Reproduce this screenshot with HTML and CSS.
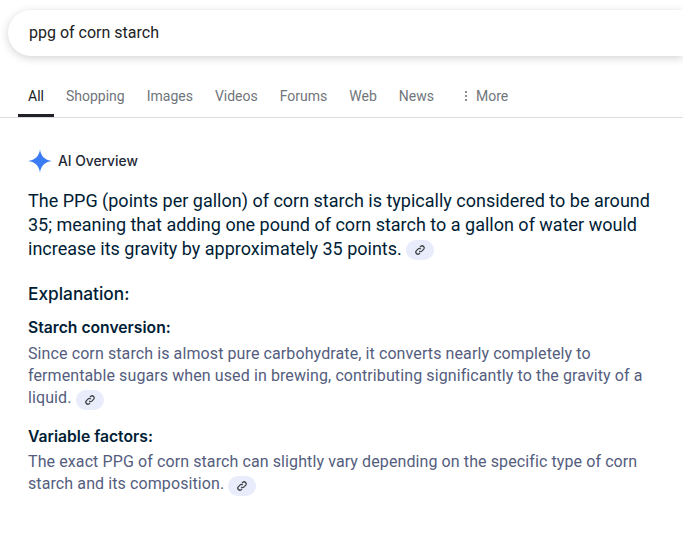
FILE: index.html
```
<!DOCTYPE html>
<html lang="en">
<head>
<meta charset="utf-8">
<title>ppg of corn starch</title>
<link rel="stylesheet" href="styles.css">
</head>
<body>
<header class="top">
  <div class="search">ppg of corn starch</div>
  <nav class="tabs">
    <a class="tab active">All</a>
    <a class="tab">Shopping</a>
    <a class="tab">Images</a>
    <a class="tab">Videos</a>
    <a class="tab">Forums</a>
    <a class="tab">Web</a>
    <a class="tab">News</a>
    <a class="tab more"><svg class="dots" width="4" height="12" viewBox="0 0 4 12"><circle cx="2" cy="2" r="1.1"/><circle cx="2" cy="6" r="1.1"/><circle cx="2" cy="10" r="1.1"/></svg>More</a>
  </nav>
</header>
<main class="overview">
  <div class="ai-head">
    <svg class="spark" width="24" height="24" viewBox="0 0 24 24"><path d="M12 0C12.6 6.8 16.6 11 24 12C16.6 13 12.6 17.2 12 24C11.4 17.2 7.4 13 0 12C7.4 11 11.4 6.8 12 0Z"/></svg>
    <span class="ai-title">AI Overview</span>
  </div>
  <p class="lead">The PPG (points per gallon) of corn starch is typically considered to be around 35; meaning that adding one pound of corn starch to a gallon of water would increase its gravity by approximately 35 points. <span class="chip"><svg width="10" height="10" viewBox="0 0 24 24"><path d="M10 14a5 5 0 0 0 7 0l4-4a5 5 0 0 0-7-7l-2 2M14 10a5 5 0 0 0-7 0l-4 4a5 5 0 0 0 7 7l2-2"/></svg></span></p>
  <h2 class="explain">Explanation:</h2>
  <h3 class="item-title">Starch conversion:</h3>
  <p class="item-text">Since corn starch is almost pure carbohydrate, it converts nearly completely to fermentable sugars when used in brewing, contributing significantly to the gravity of a liquid. <span class="chip"><svg width="10" height="10" viewBox="0 0 24 24"><path d="M10 14a5 5 0 0 0 7 0l4-4a5 5 0 0 0-7-7l-2 2M14 10a5 5 0 0 0-7 0l-4 4a5 5 0 0 0 7 7l2-2"/></svg></span></p>
  <h3 class="item-title second">Variable factors:</h3>
  <p class="item-text tight">The exact PPG of corn starch can slightly vary depending on the specific type of corn starch and its composition. <span class="chip"><svg width="10" height="10" viewBox="0 0 24 24"><path d="M10 14a5 5 0 0 0 7 0l4-4a5 5 0 0 0-7-7l-2 2M14 10a5 5 0 0 0-7 0l-4 4a5 5 0 0 0 7 7l2-2"/></svg></span></p>
</main>
</body>
</html>
```
FILE: styles.css
```
html, body { margin: 0; padding: 0; background: #fff; height: 100%; overflow: hidden; }
body { font-family: Roboto, "Liberation Sans", sans-serif; color: #001d35; }
.top { padding-top: 10px; border-bottom: 1px solid #dadce0; }
.search {
  margin-left: 8px;
  height: 46px;
  line-height: 45px;
  padding-left: 21px;
  border-radius: 23px 0 0 23px;
  background: #fff;
  font-size: 16px;
  color: #202124;
  box-shadow: 0 2px 8px rgba(32, 33, 36, 0.2);
}
.tabs { display: flex; margin-top: 28px; padding-left: 18px; height: 33px; }
.tab {
  font-size: 14px;
  line-height: 24px;
  color: #70757a;
  margin-right: 22px;
  height: 33px;
  box-sizing: border-box;
}
.tab.active { color: #202124; border-bottom: 3px solid #202124; padding: 0 10px; margin-right: 12px; }
.tab.more { margin-left: 8px; margin-right: 0; display: flex; align-items: flex-start; }
.dots { fill: #70757a; margin: 6px 8px 0 0; }
.overview { padding: 31px 30px 0 28px; }
.ai-head { display: flex; align-items: center; gap: 6px; height: 24px; }
.spark { fill: #3b7cf4; }
.ai-title { font-family: Inter, sans-serif; font-size: 13.8px; font-weight: 500; color: #1f2937; }
.lead { margin: 16px 0 0; font-size: 18px; line-height: 24px; color: #001d35; }
.chip {
  display: inline-flex; align-items: center; justify-content: center;
  width: 28px; height: 20px; border-radius: 10px; background: #e8ecfb;
  vertical-align: -2px; margin: -3px 0;
}
.lead .chip { vertical-align: 0; }
.chip svg { fill: none; stroke: #3c4043; stroke-width: 3; }
.explain { margin: 21px 0 0; font-family: Inter, sans-serif; font-size: 17.3px; line-height: 24px; font-weight: 500; color: #001d35; }
.item-title { margin: 11px 0 0; font-family: Inter, sans-serif; font-size: 15.7px; line-height: 22px; font-weight: 600; color: #001d35; }
.item-title.second { margin-top: 17px; }
.item-text { margin: 4px 0 0; font-size: 16px; line-height: 22px; letter-spacing: 0.1px; color: #545d7e; }
.item-text.tight { margin-top: 3px; }
```
